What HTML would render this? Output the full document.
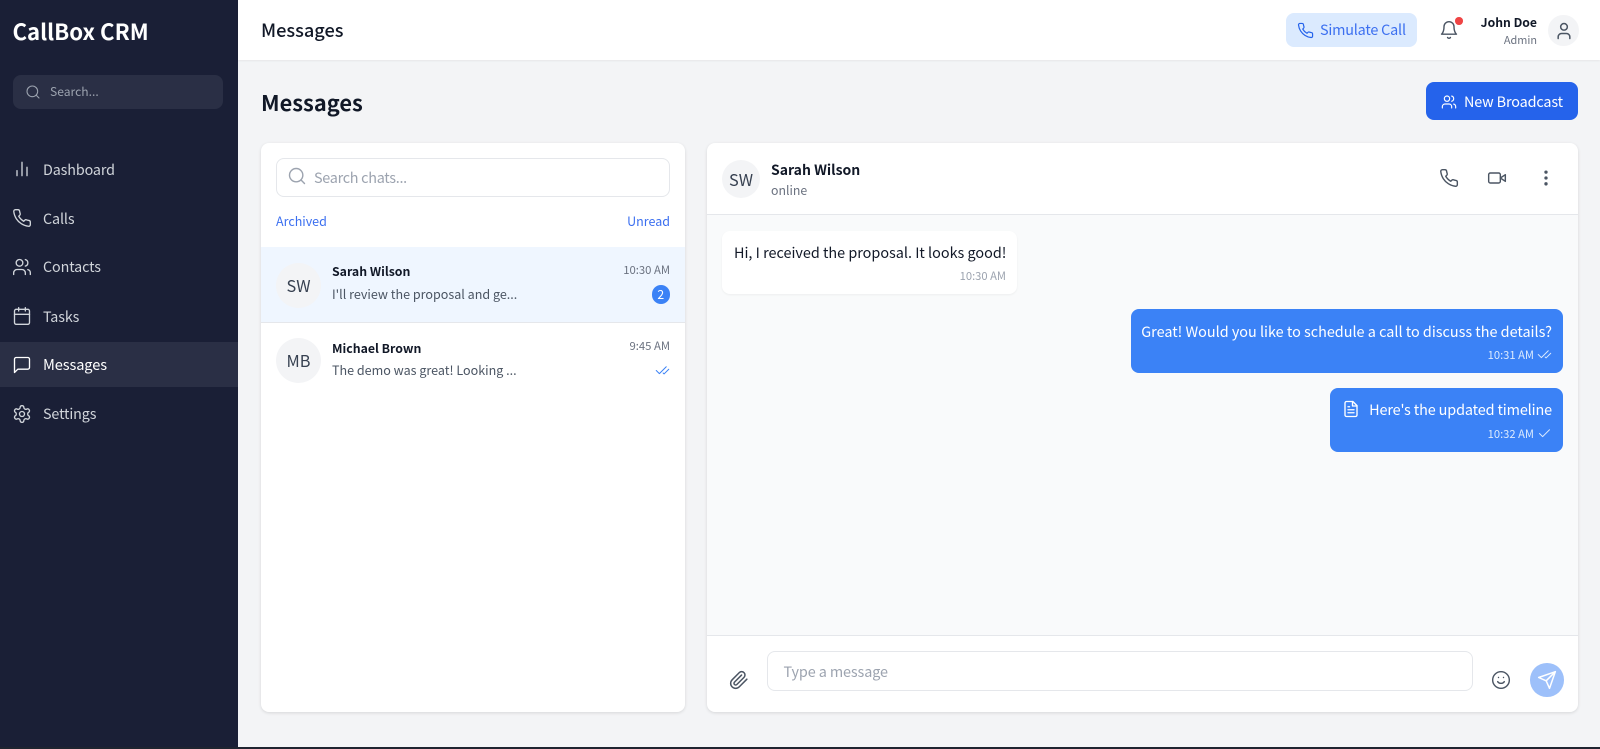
<!DOCTYPE html>
<html lang="en"><head><meta charset="utf-8"><title>CallBox CRM</title>
<style>
*{box-sizing:border-box;margin:0;padding:0}
html,body{width:1600px;height:749px;overflow:hidden;background:#f3f4f6}
body{position:relative;font-family:"Noto Sans CJK JP","Liberation Sans",sans-serif;color:#111827}
.a{position:absolute}
.t{position:absolute;white-space:nowrap;line-height:20px;height:20px}
.r{text-align:right}
svg{position:absolute;fill:none;stroke:currentColor;stroke-width:2;stroke-linecap:round;stroke-linejoin:round;overflow:visible}
.card{position:absolute;background:#fff;border-radius:8px;box-shadow:0 1px 3px rgba(0,0,0,.12)}
.av{position:absolute;border-radius:50%;background:#f3f4f6;color:#374151;text-align:center}
.nav{color:#d1d5db;font-size:14.3px;letter-spacing:-.1px}
</style></head><body>
<div class="a" style="left:0;top:0;width:238px;height:747px;background:#1a1f36"></div>
<div class="t" style="left:12.5px;top:21px;color:#fff;font-size:22.2px;font-weight:700">CallBox CRM</div>
<div class="a" style="left:12.5px;top:75px;width:210.5px;height:34px;border-radius:8px;background:#2a2f45"></div>
<svg style="left:24.5px;top:84px;color:#9ca3af;stroke-width:1.6" width="16" height="16" viewBox="0 0 24 24"><circle cx="11" cy="11" r="8"/><path d="m21 21-4.3-4.3"/></svg>
<div class="t" style="left:50px;top:82px;color:#9ca3af;font-size:12.1px">Search...</div>

<div class="a" style="left:0;top:342px;width:238px;height:45px;background:#2a2f45"></div>
<svg style="left:11.5px;top:159px;color:#d1d5db;stroke-width:1.6" width="20" height="20" viewBox="0 0 24 24"><path d="M18 20V10M12 20V4M6 20v-6"/></svg>
<div class="t nav" style="left:43px;top:160px">Dashboard</div>
<svg style="left:11.5px;top:208px;color:#d1d5db;stroke-width:1.6" width="20" height="20" viewBox="0 0 24 24"><path d="M22 16.92v3a2 2 0 0 1-2.18 2 19.79 19.79 0 0 1-8.63-3.07 19.5 19.5 0 0 1-6-6 19.79 19.79 0 0 1-3.07-8.67A2 2 0 0 1 4.11 2h3a2 2 0 0 1 2 1.72 12.84 12.84 0 0 0 .7 2.81 2 2 0 0 1-.45 2.11L8.09 9.91a16 16 0 0 0 6 6l1.27-1.27a2 2 0 0 1 2.11-.45 12.84 12.84 0 0 0 2.81.7A2 2 0 0 1 22 16.92z"/></svg>
<div class="t nav" style="left:43px;top:209px">Calls</div>
<svg style="left:11.5px;top:257px;color:#d1d5db;stroke-width:1.6" width="20" height="20" viewBox="0 0 24 24"><path d="M16 21v-2a4 4 0 0 0-4-4H6a4 4 0 0 0-4 4v2"/><circle cx="9" cy="7" r="4"/><path d="M22 21v-2a4 4 0 0 0-3-3.87M16 3.13a4 4 0 0 1 0 7.75"/></svg>
<div class="t nav" style="left:43px;top:257px">Contacts</div>
<svg style="left:11.5px;top:306px;color:#d1d5db;stroke-width:1.6" width="20" height="20" viewBox="0 0 24 24"><rect x="3" y="4" width="18" height="18" rx="2"/><path d="M16 2v4M8 2v4M3 10h18"/></svg>
<div class="t nav" style="left:43px;top:307px">Tasks</div>
<svg style="left:11.5px;top:355px;color:#fff;stroke-width:1.6" width="20" height="20" viewBox="0 0 24 24"><path d="M21 15a2 2 0 0 1-2 2H7l-4 4V5a2 2 0 0 1 2-2h14a2 2 0 0 1 2 2z"/></svg>
<div class="t nav" style="left:43px;top:355px;color:#fff;font-size:14.6px">Messages</div>
<svg style="left:11.5px;top:404px;color:#d1d5db;stroke-width:1.6" width="20" height="20" viewBox="0 0 24 24"><path d="M12.22 2h-.44a2 2 0 0 0-2 2v.18a2 2 0 0 1-1 1.73l-.43.25a2 2 0 0 1-2 0l-.15-.08a2 2 0 0 0-2.73.73l-.22.38a2 2 0 0 0 .73 2.73l.15.1a2 2 0 0 1 1 1.72v.51a2 2 0 0 1-1 1.74l-.15.09a2 2 0 0 0-.73 2.73l.22.38a2 2 0 0 0 2.73.73l.15-.08a2 2 0 0 1 2 0l.43.25a2 2 0 0 1 1 1.73V20a2 2 0 0 0 2 2h.44a2 2 0 0 0 2-2v-.18a2 2 0 0 1 1-1.73l.43-.25a2 2 0 0 1 2 0l.15.08a2 2 0 0 0 2.73-.73l.22-.39a2 2 0 0 0-.73-2.73l-.15-.08a2 2 0 0 1-1-1.74v-.5a2 2 0 0 1 1-1.74l.15-.09a2 2 0 0 0 .73-2.73l-.22-.38a2 2 0 0 0-2.73-.73l-.15.08a2 2 0 0 1-2 0l-.43-.25a2 2 0 0 1-1-1.73V4a2 2 0 0 0-2-2z"/><circle cx="12" cy="12" r="3"/></svg>
<div class="t nav" style="left:43px;top:404px">Settings</div>

<div class="a" style="left:238px;top:0;width:1362px;height:59.5px;background:#fff;box-shadow:0 1px 2px rgba(0,0,0,.06)"></div>
<div class="t" style="left:261px;top:20px;font-size:18.2px;font-weight:500">Messages</div>
<div class="a" style="left:1286px;top:12.5px;width:131px;height:34px;border-radius:8px;background:#dbeafe"></div>
<svg style="left:1296.5px;top:21.5px;color:#2563eb;stroke-width:1.7" width="17" height="17" viewBox="0 0 24 24"><path d="M22 16.92v3a2 2 0 0 1-2.18 2 19.79 19.79 0 0 1-8.63-3.07 19.5 19.5 0 0 1-6-6 19.79 19.79 0 0 1-3.07-8.67A2 2 0 0 1 4.11 2h3a2 2 0 0 1 2 1.72 12.84 12.84 0 0 0 .7 2.81 2 2 0 0 1-.45 2.11L8.09 9.91a16 16 0 0 0 6 6l1.27-1.27a2 2 0 0 1 2.11-.45 12.84 12.84 0 0 0 2.81.7A2 2 0 0 1 22 16.92z"/></svg>
<div class="t" style="left:1320px;top:20px;color:#3b6ff0;font-size:14.4px;letter-spacing:-.2px">Simulate Call</div>
<svg style="left:1439px;top:20px;color:#4b5563;stroke-width:1.7" width="20" height="20" viewBox="0 0 24 24"><path d="M6 8a6 6 0 0 1 12 0c0 7 3 9 3 9H3s3-2 3-9M10.3 21a1.94 1.94 0 0 0 3.4 0"/></svg>
<div class="a" style="left:1455px;top:17px;width:7.5px;height:7.5px;border-radius:50%;background:#ef4444"></div>
<div class="t r" style="right:63px;top:12px;font-size:12.2px;font-weight:600">John Doe</div>
<div class="t r" style="right:63px;top:30px;font-size:10.9px;color:#6b7280">Admin</div>
<div class="av" style="left:1548px;top:15px;width:30.5px;height:30.5px"></div>
<svg style="left:1553.5px;top:20.5px;color:#4b5563;stroke-width:1.8" width="20" height="20" viewBox="0 0 24 24"><path d="M19 21v-2a4 4 0 0 0-4-4H9a4 4 0 0 0-4 4v2"/><circle cx="12" cy="7" r="4"/></svg>

<div class="t" style="left:261px;top:93px;font-size:21.8px;font-weight:700">Messages</div>
<div class="a" style="left:1426.3px;top:82px;width:152px;height:38px;border-radius:8px;background:#2563eb"></div>
<svg style="left:1441px;top:93.5px;color:#fff;stroke-width:1.7" width="16" height="16" viewBox="0 0 24 24"><path d="M16 21v-2a4 4 0 0 0-4-4H6a4 4 0 0 0-4 4v2"/><circle cx="9" cy="7" r="4"/><path d="M22 21v-2a4 4 0 0 0-3-3.87M16 3.13a4 4 0 0 1 0 7.75"/></svg>
<div class="t" style="left:1464px;top:92px;color:#fff;font-size:14.4px;letter-spacing:-.14px">New Broadcast</div>

<div class="card" style="left:260.7px;top:143px;width:424.3px;height:569px"></div>
<div class="a" style="left:275.5px;top:158px;width:394px;height:39px;border:1px solid #e5e7eb;border-radius:8px"></div>
<svg style="left:287px;top:166px;color:#9ca3af;stroke-width:1.7" width="20" height="20" viewBox="0 0 24 24"><circle cx="11" cy="11" r="8"/><path d="m21 21-4.3-4.3"/></svg>
<div class="t" style="left:314px;top:168px;color:#9ca3af;font-size:14.4px;letter-spacing:-.28px">Search chats...</div>
<div class="t" style="left:276px;top:211px;color:#3b6ff0;font-size:12.5px">Archived</div>
<div class="t r" style="right:930px;top:211px;color:#3b6ff0;font-size:12.5px">Unread</div>

<div class="a" style="left:260.7px;top:246.5px;width:424.3px;height:1px;background:#e5e7eb"></div>
<div class="a" style="left:260.7px;top:247px;width:424.3px;height:76px;background:#eff6ff;border-bottom:1px solid #e5e7eb"></div>
<div class="av" style="left:276px;top:262.5px;width:45px;height:45px;font-size:16.3px;line-height:45px">SW</div>
<div class="t" style="left:332px;top:261px;font-size:12.3px;font-weight:600">Sarah Wilson</div>
<div class="t" style="left:332px;top:284px;font-size:12.55px;color:#4b5563">I'll review the proposal and ge...</div>
<div class="t r" style="right:930px;top:260px;font-size:11.3px;color:#6b7280">10:30 AM</div>
<div class="a" style="left:651.5px;top:285px;width:18.5px;height:18.5px;border-radius:50%;background:#3b82f6;color:#fff;font-size:12.2px;line-height:18.5px;text-align:center">2</div>

<div class="av" style="left:276px;top:338px;width:45px;height:45px;font-size:16.3px;line-height:45px">MB</div>
<div class="t" style="left:332px;top:338px;font-size:12.3px;font-weight:600">Michael Brown</div>
<div class="t" style="left:332px;top:360px;font-size:12.55px;color:#4b5563">The demo was great! Looking ...</div>
<div class="t r" style="right:930px;top:336px;font-size:11.3px;color:#6b7280">9:45 AM</div>
<svg style="left:654.5px;top:362.5px;color:#3b82f6;stroke-width:1.6" width="15" height="15" viewBox="0 0 24 24"><path d="M18 6 7 17l-5-5M22 10l-7.500 7.500L13 16"/></svg>

<div class="card" style="left:707px;top:143px;width:871.2px;height:569px"></div>
<div class="a" style="left:707px;top:214px;width:871.2px;height:422px;background:#f9fafb;border-top:1px solid #e5e7eb;border-bottom:1px solid #e5e7eb"></div>
<div class="av" style="left:722px;top:159.5px;width:38px;height:38px;font-size:16.3px;line-height:38px">SW</div>
<div class="t" style="left:771px;top:160px;font-size:14px;font-weight:600">Sarah Wilson</div>
<div class="t" style="left:771px;top:180px;font-size:12.3px;color:#6b7280">online</div>
<svg style="left:1439px;top:168px;color:#4b5563;stroke-width:1.7" width="20" height="20" viewBox="0 0 24 24"><path d="M22 16.92v3a2 2 0 0 1-2.18 2 19.79 19.79 0 0 1-8.63-3.07 19.5 19.5 0 0 1-6-6 19.79 19.79 0 0 1-3.07-8.67A2 2 0 0 1 4.11 2h3a2 2 0 0 1 2 1.72 12.84 12.84 0 0 0 .7 2.81 2 2 0 0 1-.45 2.11L8.09 9.91a16 16 0 0 0 6 6l1.27-1.27a2 2 0 0 1 2.11-.45 12.84 12.84 0 0 0 2.81.7A2 2 0 0 1 22 16.92z"/></svg>
<svg style="left:1487px;top:168px;color:#4b5563;stroke-width:1.7" width="20" height="20" viewBox="0 0 24 24"><path d="m22 8-6 4 6 4V8Z"/><rect x="2" y="6" width="14" height="12" rx="2"/></svg>
<svg style="left:1536px;top:168px;color:#4b5563" width="20" height="20" viewBox="0 0 24 24"><circle cx="12" cy="12" r="1"/><circle cx="12" cy="5" r="1"/><circle cx="12" cy="19" r="1"/></svg>

<div class="a" style="left:722px;top:231px;width:295px;height:63px;background:#fff;border-radius:8px;box-shadow:0 1px 2px rgba(0,0,0,.05)"></div>
<div class="t" style="left:734px;top:243px;font-size:14.4px">Hi, I received the proposal. It looks good!</div>
<div class="t r" style="right:594px;top:266px;font-size:11.2px;color:#9ca3af">10:30 AM</div>

<div class="a" style="left:1131px;top:309px;width:432px;height:64px;background:#3b82f6;border-radius:8px"></div>
<div class="t r" style="right:48px;top:322px;color:#fff;font-size:14.4px">Great! Would you like to schedule a call to discuss the details?</div>
<div class="t r" style="right:66px;top:345px;font-size:11.2px;color:#dbeafe">10:31 AM</div>
<svg style="left:1537px;top:347px;color:#dbeafe;stroke-width:1.5" width="15" height="15" viewBox="0 0 24 24"><path d="M18 6 7 17l-5-5M22 10l-7.500 7.500L13 16"/></svg>

<div class="a" style="left:1330px;top:388px;width:233px;height:64px;background:#3b82f6;border-radius:8px"></div>
<svg style="left:1342px;top:400px;color:#fff;stroke-width:1.8" width="18" height="18" viewBox="0 0 24 24"><path d="M14.5 2H6a2 2 0 0 0-2 2v16a2 2 0 0 0 2 2h12a2 2 0 0 0 2-2V7.500L14.500 2z"/><path d="M14 2v6h6M16 13H8M16 17H8M10 9H8"/></svg>
<div class="t r" style="right:48px;top:400px;color:#fff;font-size:14.4px;letter-spacing:-.12px">Here's the updated timeline</div>
<div class="t r" style="right:66px;top:424px;font-size:11.2px;color:#dbeafe">10:32 AM</div>
<svg style="left:1537px;top:426px;color:#dbeafe;stroke-width:1.5" width="15" height="15" viewBox="0 0 24 24"><path d="M20 6 9 17l-5-5"/></svg>

<svg style="left:729px;top:670px;color:#4b5563;stroke-width:1.8" width="20" height="20" viewBox="0 0 24 24"><path d="m21.44 11.05-9.19 9.19a6 6 0 0 1-8.49-8.49l8.57-8.57A4 4 0 1 1 18 8.84l-8.59 8.57a2 2 0 0 1-2.83-2.83l8.49-8.48"/></svg>
<div class="a" style="left:767px;top:651px;width:706px;height:40px;border:1px solid #e5e7eb;border-radius:8px"></div>
<div class="t" style="left:783.5px;top:662px;font-size:14.4px;letter-spacing:-.1px;color:#9ca3af">Type a message</div>
<svg style="left:1491px;top:670px;color:#4b5563;stroke-width:1.7" width="20" height="20" viewBox="0 0 24 24"><circle cx="12" cy="12" r="10"/><path d="M8 14s1.500 2 4 2 4-2 4-2M9 9h.01M15 9h.01"/></svg>
<div class="a" style="left:1530px;top:663px;width:33.5px;height:33.5px;border-radius:50%;background:#9dc0fa"></div>
<svg style="left:1536.500px;top:670px;color:#fff;stroke-width:1.8" width="20" height="20" viewBox="0 0 24 24"><path d="m22 2-7 20-4-9-9-4Z"/><path d="M22 2 11 13"/></svg>

<div class="a" style="left:0;top:747px;width:1600px;height:2px;background:#1f2430"></div>
</body></html>
